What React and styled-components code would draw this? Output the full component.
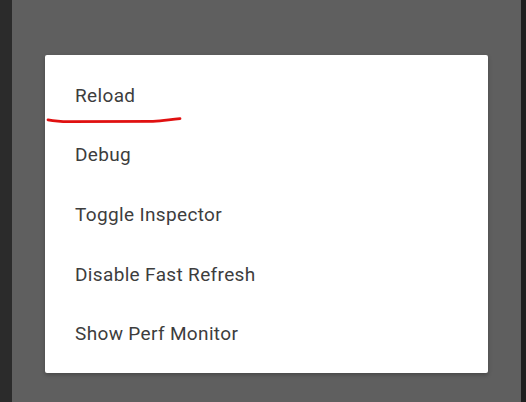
import React from "react";
import styled, { createGlobalStyle } from "styled-components";

const Global = createGlobalStyle`
  html, body { margin: 0; padding: 0; }
  body { width: 526px; height: 402px; overflow: hidden; font-family: Roboto, "Noto Sans", sans-serif; }
`;

const Screen = styled.div`
  display: flex;
  width: 526px;
  height: 402px;
`;

const EdgeBar = styled.div`
  width: ${(p) => p.$w}px;
  background: ${(p) => p.$c};
  flex: none;
`;

const Backdrop = styled.div`
  flex: 1;
  background: #5f5f5f;
  padding: 55px 0 0 33px;
  box-sizing: border-box;
`;

const Menu = styled.div`
  position: relative;
  width: 443px;
  height: 318px;
  box-sizing: border-box;
  padding: 10px 0;
  background: #ffffff;
  border-radius: 2px;
  box-shadow: 0 2px 4px rgba(0, 0, 0, 0.25);
  display: flex;
  flex-direction: column;
`;

const Item = styled.div`
  height: 59.6px;
  display: flex;
  align-items: center;
  padding-left: 30px;
  padding-top: 1px;
  box-sizing: border-box;
  font-size: 19px;
  font-weight: 400;
  color: #3d3d3d;
  letter-spacing: 0.35px;
`;

const Scribble = styled.svg`
  position: absolute;
  left: 2px;
  top: 60px;
  overflow: visible;
`;

const items = [
  "Reload",
  "Debug",
  "Toggle Inspector",
  "Disable Fast Refresh",
  "Show Perf Monitor",
];

export default function App() {
  return (
    <>
      <Global />
      <Screen>
        <EdgeBar $w={12} $c="#2b2b2b" />
        <Backdrop>
          <Menu>
            {items.map((t) => (
              <Item key={t}>{t}</Item>
            ))}
            <Scribble width="134" height="8" viewBox="0 0 134 8">
              <path
                d="M1 4.8 C 8 6.2, 14 6.6, 22 6.6 L 106 6.4 C 116 6.2, 122 4.6, 133 3.6"
                stroke="#e01010"
                strokeWidth="2.8"
                fill="none"
                strokeLinecap="round"
              />
            </Scribble>
          </Menu>
        </Backdrop>
        <EdgeBar $w={5} $c="#1f1f1f" />
      </Screen>
    </>
  );
}
